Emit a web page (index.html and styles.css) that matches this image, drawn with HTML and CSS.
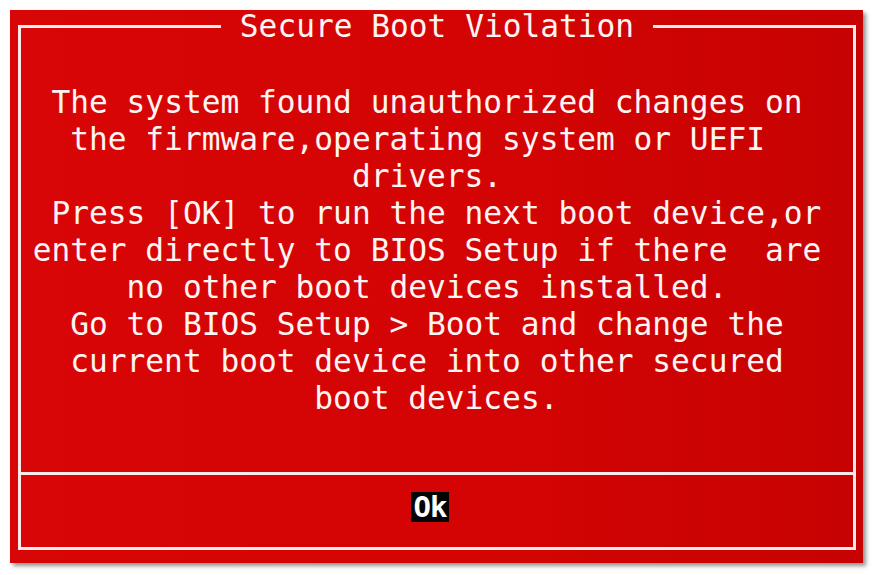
FILE: index.html
```html
<!DOCTYPE html>
<html lang="en">
<head>
    <meta charset="UTF-8">
    <meta name="viewport" content="width=device-width, initial-scale=1.0">
    <title>Secure Boot Violation</title>

    <link rel="stylesheet" href="styles.css">
</head>
<body>

    <div class="screen">
        <fieldset class="dialog">
            <legend class="dialogTitle">Secure Boot Violation</legend>

            <div class="message">
                <div class="line">The system found unauthorized changes on</div>
                <div class="line">the firmware,operating system or UEFI </div>
                <div class="line">drivers.</div>
                <div class="line"> Press [OK] to run the next boot device,or</div>
                <div class="line">enter directly to BIOS Setup if there  are</div>
                <div class="line">no other boot devices installed.</div>
                <div class="line">Go to BIOS Setup &gt; Boot and change the</div>
                <div class="line">current boot device into other secured</div>
                <div class="line"> boot devices.</div>
            </div>

            <div class="actions">
                <button id="okButton" type="button">Ok</button>
            </div>
        </fieldset>
    </div>

</body>
</html>
```

FILE: styles.css
```css
*{
    margin: 0;
    padding: 0;
    box-sizing: border-box;
}

html, body{
    width: 875px;
    height: 575px;
    background-color: #ffffff;
    overflow: hidden;
}

body{
    padding: 10px 0 0 10px;
    font-family: "DejaVu Sans Mono", "Liberation Mono", monospace;
    font-size: 31.2px;
    color: #fff4f4;
}

.screen{
    width: 853px;
    height: 553px;
    padding: 1px 7px 13px 8px;

    background: linear-gradient(90deg, #d80606 0%, #d40404 55%, #c70202 100%);
    box-shadow: 3px 3px 4px rgba(60, 60, 60, 0.55);
}

.dialog{
    border: 3px solid #fbeaea;
    min-inline-size: 0;
}

.dialogTitle{
    margin: 0 auto;
    padding: 0 19px;
    line-height: 30px;
    white-space: pre;
}

.message{
    padding: 43px 20px 55px 0;
}

.line{
    height: 37px;
    line-height: 37px;
    text-align: center;
    white-space: pre;
}

.actions{
    display: flex;
    justify-content: center;
    padding: 17px 0 25px;
    border-top: 3px solid #fbeaea;
}

#okButton{
    width: 38px;
    height: 30px;
    margin-right: 14px;
    padding: 0;
    border: 0;
    outline: none;

    background-color: #050505;
    color: #ffffff;
    font-family: inherit;
    font-size: 29px;
    font-weight: bold;
    line-height: 30px;
    letter-spacing: -1px;
    text-align: center;
}

#okButton:hover{
    cursor: pointer;
}
```
